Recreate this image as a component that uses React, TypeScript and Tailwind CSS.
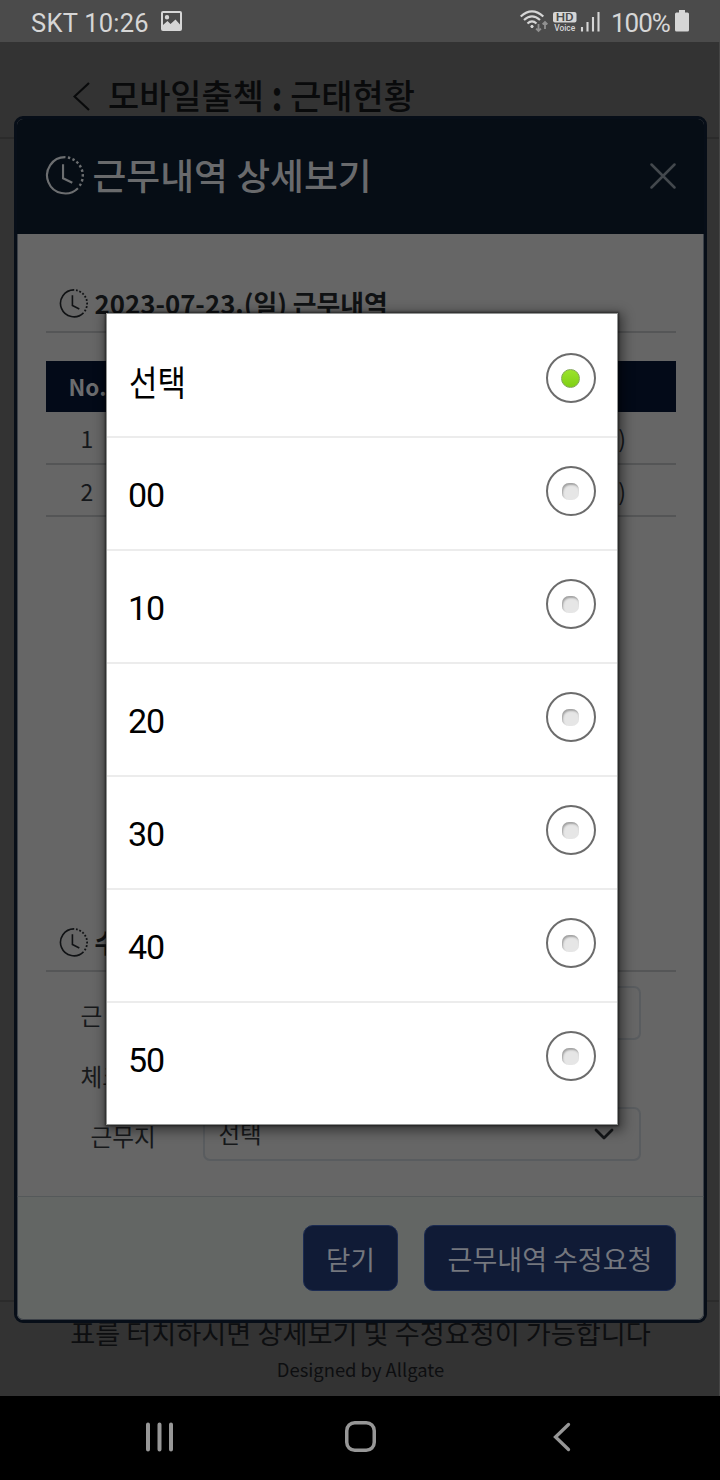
import type { ReactNode } from "react";

const OPTIONS = ["선택", "00", "10", "20", "30", "40", "50"];

function ClockIcon({ className }: { className: string }) {
  return (
    <svg viewBox="0 0 40 40" fill="none" stroke="currentColor" className={className}>
      <path d="M21 1.2A18.6 18.6 0 1 0 33.8 33" strokeWidth="2.2" />
      <path d="M23.5 1.6A18.8 18.8 0 0 1 34.5 32" strokeWidth="2.5" strokeDasharray="2.5 2.4" />
      <path d="M18.500 8.500V22.800L28 27.500" strokeWidth="2.200" />
    </svg>
  );
}

function StatusBar() {
  return (
    <header className="flex h-[42px] shrink-0 items-center bg-[#4b4b4b] pl-[31px] pr-[31px] font-['Roboto',sans-serif] text-[#d6d6d6]">
      <span className="w-[130px] whitespace-nowrap pt-[4px] text-[25.500px] leading-[38px] tracking-[0.250px]">SKT 10:26</span>
      <svg viewBox="0 0 21 20" className="h-[20px] w-[21px]">
        <path fill="currentColor" fillRule="evenodd" d="M2 0H19Q21 0 21 2V18Q21 20 19 20H2Q0 20 0 18V2Q0 0 2 0ZM2 2V14L6.5 10 9.5 13 14.5 8.5 19 13.5V2ZM6 4A2.2 2.2 0 1 1 6 8.4 2.2 2.2 0 1 1 6 4Z" />
      </svg>
      <svg viewBox="0 0 80 24" className="ml-auto h-[24px] w-[80px]" fill="none" stroke="currentColor">
        <g strokeWidth="2.200">
          <path d="M.7 7.500Q12-2.800 23.300 7.500M4 11Q12 3.700 20 11M7.500 14.500Q12 10.300 16.500 14.500" />
          <circle cx="12" cy="17.500" r="1.200" fill="currentColor" strokeWidth="1" />
        </g>
        <path d="M18.500 15v7m-2.400-2.400 2.400 2.400 2.400-2.400M25 20v-7m-2.400 2.400L25 13l2.400 2.400" stroke="#909090" strokeWidth="1.800" />
        <rect x="33" y="3" width="23.500" height="10.500" rx="2" fill="currentColor" stroke="none" />
        <text x="44.700" y="12" textAnchor="middle" fontSize="10.500" fontWeight="500" textLength="18" lengthAdjust="spacingAndGlyphs" fill="#4b4b4b" stroke="none">HD</text>
        <text x="44.700" y="21.700" textAnchor="middle" fontSize="8.500" fontWeight="500" textLength="21" lengthAdjust="spacingAndGlyphs" fill="currentColor" stroke="none">Voice</text>
        <path d="M62 18v4.500M67.500 13v9.500M73 8v14.500M78.500 3v19.500" strokeWidth="2.100" />
      </svg>
      <span className="ml-[11px] w-[64px] whitespace-nowrap pt-[4px] text-[26px] leading-[38px] tracking-[-1px]">100%</span>
      <svg viewBox="0 0 14 22" className="h-[22px] w-[14px]" fill="currentColor">
        <path d="M4 0H10V2.500H12.500Q14 2.500 14 4V20Q14 21.500 12.500 21.500H1.500Q0 21.500 0 20V4Q0 2.500 1.500 2.500H4Z" />
      </svg>
    </header>
  );
}

function SectionTitle({ children }: { children: ReactNode }) {
  return (
    <div className="flex h-[58px] shrink-0 items-center border-b-2 border-[#555657] pl-[13px] text-[#101214]">
      <ClockIcon className="h-[29px] w-[29px] shrink-0" />
      <h2 className="ml-[7px] whitespace-nowrap text-[25.800px] font-bold leading-[40px]">{children}</h2>
    </div>
  );
}

function TableRow({ no }: { no: string }) {
  return (
    <div className="flex h-[52.500px] items-center justify-between border-b-2 border-[#545556] pl-[35px] pr-[50px] pt-[2px] text-[23px] text-[#15181b]">
      <span>{no}</span>
      <span>)</span>
    </div>
  );
}

function DetailModal() {
  return (
    <section className="absolute left-[13.500px] top-[74px] flex h-[1207px] w-[693.500px] flex-col overflow-hidden rounded-[9px] border-[3px] border-[#070e18] bg-[#666666]">
      <div className="flex h-[115px] shrink-0 items-center bg-[#060d15] pb-[2px] pl-[28px] pr-[28px]">
        <ClockIcon className="h-[39px] w-[39px] text-[#6c6e70]" />
        <h1 className="ml-[9px] -translate-y-[2px] text-[36.800px] font-medium leading-[50px] text-[#696a6c]">근무내역 상세보기</h1>
        <svg viewBox="0 0 26 26" className="ml-auto h-[26px] w-[26px]" fill="none" stroke="#43484d" strokeWidth="2.500" strokeLinecap="round">
          <path d="M1.500 1.500 24.500 24.500M24.500 1.500 1.500 24.500" />
        </svg>
      </div>
      <div className="flex min-h-0 flex-1 flex-col border-x border-[#3b4047] pl-[28px] pr-[27px] pt-[41px]">
        <SectionTitle>2023-07-23.(일) 근무내역</SectionTitle>
        <div className="mt-[28px] h-[553px] shrink-0">
          <div className="flex h-[51px] items-center bg-[#030a18] pl-[23px] text-[22.500px] font-bold text-[#6b6c6e]">No.</div>
          <TableRow no="1" />
          <TableRow no="2" />
        </div>
        <SectionTitle>수</SectionTitle>
        <div className="mt-[14px] flex flex-col gap-[7px] pl-[35px] pr-[35px] text-[23.700px] text-[#17191b]">
          <div className="flex h-[54px] items-center">
            <span className="w-[122px] pt-[6px]">근</span>
            <div className="h-[54px] flex-1 rounded-[7px] border-2 border-[#595c5f]" />
          </div>
          <div className="flex h-[53px] items-center pt-[6px]">체크</div>
          <div className="flex h-[54px] items-center">
            <span className="w-[122px] pl-[10px] pt-[6px]">근무지</span>
            <div className="flex h-[54px] flex-1 items-center justify-between rounded-[7px] border-2 border-[#595c5f] pl-[14px] pr-[25px]">
              <span className="text-[23.500px]">선택</span>
              <svg viewBox="0 0 20 12" className="h-[12px] w-[20px]" fill="none" stroke="#151719" strokeWidth="2.800" strokeLinecap="round" strokeLinejoin="round">
                <path d="M2 2 10 10 18 2" />
              </svg>
            </div>
          </div>
        </div>
      </div>
      <div className="flex h-[124px] shrink-0 items-center justify-end gap-[26px] rounded-b-[6px] border border-x-[#3b4047] border-b-[#3b4047] border-t-[#55595a] bg-[#636664] pr-[27px] text-[27px] text-[#74777e]">
        <button className="h-[66px] w-[95px] rounded-[10px] border border-[#1b2b52] bg-[#101b36] pt-[2px] text-[26.500px]">닫기</button>
        <button className="h-[66px] w-[252px] rounded-[10px] border border-[#1b2b52] bg-[#101b36] pt-[2px]">근무내역 수정요청</button>
      </div>
    </section>
  );
}

function Radio({ checked }: { checked: boolean }) {
  return (
    <span className="flex h-[50px] w-[50px] items-center justify-center rounded-full border-[2.500px] border-[#6c6c6c] bg-white">
      {checked ? (
        <span className="h-[19px] w-[19px] rounded-full border border-[#83a758] bg-linear-to-b from-[#9be32c] to-[#80d013]" />
      ) : (
        <span className="h-[17px] w-[17px] rounded-[7px] bg-[#e6e6e6] shadow-[inset_1px_2px_2px_#a2a2a2]" />
      )}
    </span>
  );
}

function OptionList() {
  return (
    <ul className="absolute left-[106px] top-[313px] h-[812px] w-[512px] border border-[#929493] bg-white pt-[11px] font-['Roboto','Noto_Sans_CJK_KR',sans-serif] text-black shadow-[0_0_2px_1px_rgba(0,0,0,0.5),2px_3px_11px_3px_rgba(0,0,0,0.45)]">
      {OPTIONS.map((option, i) => (
        <li key={option} className="flex h-[113px] items-center justify-between border-b-2 border-[#ececec] pl-[22px] pr-[21.500px] last:border-transparent">
          <span className={i === 0 ? "origin-left scale-x-[0.87] pt-[8px] text-[35.500px]" : "-ml-[1px] pt-[4px] text-[34px] tracking-[-1px]"}>{option}</span>
          <span className="pb-[5px]">
            <Radio checked={i === 0} />
          </span>
        </li>
      ))}
    </ul>
  );
}

function NavBar() {
  return (
    <nav className="flex h-[84px] shrink-0 items-center bg-black pb-[3px] pl-[145px] text-[#979797]">
      <svg viewBox="0 0 29 30" className="h-[30px] w-[29px]" stroke="currentColor" strokeWidth="4" strokeLinecap="round">
        <path d="M3 2.500v25M14.500 2.500v25M26 2.500v25" />
      </svg>
      <svg viewBox="0 0 31 31" className="ml-[171px] h-[31px] w-[31px]" fill="none" stroke="currentColor" strokeWidth="3.500">
        <rect x="1.750" y="1.750" width="27.500" height="27.500" rx="8" />
      </svg>
      <svg viewBox="0 0 18 30" className="ml-[177px] h-[30px] w-[18px]" fill="none" stroke="currentColor" strokeWidth="3.300" strokeLinecap="round">
        <path d="M15.500 2.500 2.500 15 15.500 27.500" />
      </svg>
    </nav>
  );
}

export default function App() {
  return (
    <div className="relative flex h-[1480px] w-[720px] flex-col overflow-hidden bg-black font-['Noto_Sans_CJK_KR',sans-serif]">
      <StatusBar />
      <main className="relative flex flex-1 flex-col border-r border-[#454545] bg-[#333333]">
        <div className="flex h-[97px] shrink-0 items-center border-b-2 border-[#2b2b2b] pl-[73px] pt-[13px] text-[#090a0b]">
          <svg viewBox="0 0 17 29" className="h-[29px] w-[17px]" fill="none" stroke="currentColor" strokeWidth="2.200">
            <path d="M16 1 1.500 14.500 16 28" />
          </svg>
          <h1 className="ml-[18px] -translate-y-px whitespace-nowrap text-[33.900px] font-medium leading-[50px]">
            모바일출첵 <span className="inline-block -translate-y-[2px] scale-y-[1.200] font-bold">:</span> 근태현황
          </h1>
        </div>
        <div className="flex-1" />
        <footer className="flex h-[96px] shrink-0 flex-col items-center border-t-2 border-[#2b2b2b] pl-[2px] pt-[10px] text-[#0d0e10]">
          <p className="whitespace-nowrap text-[27.200px] leading-[41px]">표를 터치하시면 상세보기 및 수정요청이 가능합니다</p>
          <p className="text-[18.400px] leading-[33px]">Designed by Allgate</p>
        </footer>
        <DetailModal />
      </main>
      <NavBar />
      <OptionList />
    </div>
  );
}
